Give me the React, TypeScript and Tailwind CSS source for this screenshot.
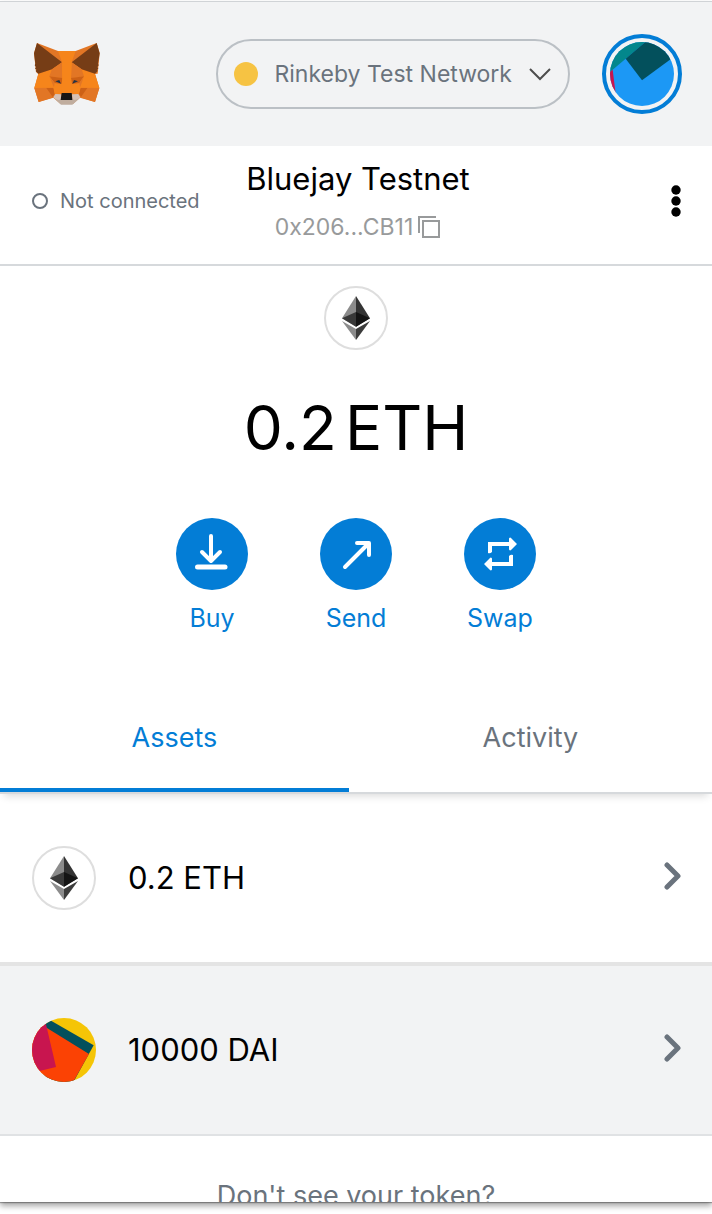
import { useState } from "react";

function Fox() {
  return (
    <svg viewBox="96 120 216 204" className="h-[68px] w-[72px]" aria-hidden="true">
      <path fill="#e27625" d="M111 129 174 153H227L290 129 299 160 293 221 285 222 298 264 285 306 240 293 220 311H181L160 293 116 306 103 264 115 222 108 216 102 160Z" />
      <path fill="#f6851b" d="M174 153H227L215 187 245 208 285 221 298 264 242 263 240 282 217 279H183L161 282 160 263 103 264 115 221 156 208 186 187Z" />
      <path fill="#763d16" d="M111 129 186 187 156 208 115 221 107 213 110 209 105 206 108 201 104 196 106 191 102 160Z" />
      <path fill="#763d16" d="M290 129 215 187 245 208 285 221 293 213 291 209 295 206 292 201 296 196 294 191 299 160Z" />
      <path fill="#e27625" d="M186 187 156 208 148 229 187 235ZM215 187 245 208 252 229 213 235Z" />
      <path fill="#cd6116" d="M148 229 187 234 185 252 164 249ZM252 229 213 234 216 252 238 249Z" />
      <path fill="#e27625" d="M148 229 164 249 162 263ZM252 229 238 249 240 263Z" />
      <path fill="#f6851b" d="M186 187 187 235 184 279H217L213 235 215 187Z" />
      <path fill="#e27625" d="M103 264H160L161 292 116 306ZM298 264H242L240 292 285 306Z" />
      <path fill="#cd6116" d="M139 264H160L164 281 158 291ZM262 264H242L237 281 243 291Z" />
      <path fill="#f6851b" d="M160 260 186 254 184 281 165 283ZM242 260 214 254 217 281 236 283Z" />
      <path fill="#233447" d="M166 244 178 240 183 251ZM234 244 222 240 217 251Z" />
      <path fill="#d7c1b3" d="M160 292 166 282 184 283 183 299H217L216 283 235 282 241 292 220 311H181Z" />
      <path fill="#c0ad9e" d="M177 300 183 297H217L224 300 236 297 217 314H183L165 297Z" />
      <path fill="#161616" d="M185 279H215L217 300H182Z" />
    </svg>
  );
}

function EthBadge() {
  return (
    <span className="flex size-16 shrink-0 items-center justify-center rounded-full border-2 border-[#dedede] bg-white">
      <svg viewBox="0 0 84 132" className="h-11 w-7" aria-hidden="true">
        <path fill="#343434" d="M42 0 84 67 42 92Z" />
        <path fill="#8c8c8c" d="M42 0 0 67 42 92Z" />
        <path fill="#141414" d="M42 48 84 67 42 92Z" />
        <path fill="#393939" d="M42 48 0 67 42 92Z" />
        <path fill="#3c3c3b" d="M42 99 84 75 42 132Z" />
        <path fill="#8c8c8c" d="M42 99 0 75 42 132Z" />
      </svg>
    </span>
  );
}

function AccountAvatar() {
  return (
    <svg viewBox="480 66 192 192" className="size-16 rounded-full" aria-hidden="true">
      <path fill="#1c98f5" d="M480 66H672V258H480Z" />
      <path fill="#03878c" d="M480 66H586L527 116 480 156Z" />
      <path fill="#03505c" d="M527 116 586 66H672V110L576 181Z" />
      <path fill="#c8154f" d="M480 155 488 149 497 222 480 215Z" />
    </svg>
  );
}

function DaiAvatar() {
  return (
    <svg viewBox="96 84 192 192" className="size-16 shrink-0 rounded-full" aria-hidden="true">
      <path fill="#f5c506" d="M96 84H288V276H96Z" />
      <path fill="#03505c" d="M132 80 281 166 218 280H130Z" />
      <path fill="#fb4204" d="M130 107 267 192 217 280H96V120Z" />
      <path fill="#c8154f" d="M135 90 168 231 96 248V84Z" />
    </svg>
  );
}

function BuyIcon() {
  return (
    <svg viewBox="0 0 72 72" className="size-[72px]" fill="none" stroke="#fff" strokeWidth="4" strokeLinecap="round" strokeLinejoin="round" aria-hidden="true">
      <path d="M35 18V42M26 34 35 43 44 34" />
      <path d="M21.500 49H49" strokeWidth="5" />
    </svg>
  );
}

function SendIcon() {
  return (
    <svg viewBox="0 0 72 72" className="size-[72px]" fill="none" stroke="#fff" strokeWidth="4" strokeLinecap="round" strokeLinejoin="round" aria-hidden="true">
      <path d="M25 49 48 26M37 25H49V37" />
    </svg>
  );
}

function SwapIcon() {
  return (
    <svg viewBox="0 0 72 72" className="size-[72px]" fill="#fff" aria-hidden="true">
      <path d="M24 35V24H45V20.500Q46 19 47 20L53 26 47 32Q46 33 45 31.500V28H28V34Q26 36 24 35Z" />
      <path d="M49 37V48H28V51.500Q27 53 26 52L20 46 26 40Q27 39 28 40.500V44H45V38Q47 36 49 37Z" />
    </svg>
  );
}

const actions = [
  { label: "Buy", Icon: BuyIcon },
  { label: "Send", Icon: SendIcon },
  { label: "Swap", Icon: SwapIcon },
];

function ChevronRight() {
  return (
    <svg viewBox="0 0 18 32" className="h-8 w-[18px]" fill="none" stroke="#6a737d" strokeWidth="5" strokeLinecap="round" strokeLinejoin="round" aria-hidden="true">
      <path d="M4 3 15 14 4 25" />
    </svg>
  );
}

export default function App() {
  const [tab, setTab] = useState("Assets");
  return (
    <div className="h-screen overflow-hidden bg-white pt-px pb-3 font-['Inter',sans-serif]">
      <div className="flex h-full flex-col overflow-hidden border-t border-[#d0d3d6] bg-white shadow-[0_4px_6px_rgba(0,0,0,0.35),0_1px_1px_rgba(0,0,0,0.3)]">
        <header className="flex h-36 shrink-0 items-center bg-[#f2f3f4] pr-[30px] pl-8">
          <Fox />
          <button className="ml-auto flex h-[70px] items-center rounded-full border-2 border-[#bbc0c5] px-4 text-[23px] text-[#6a737d]">
            <span className="mr-4 size-6 rounded-full bg-[#f6c343]" />
            Rinkeby Test Network
            <svg viewBox="0 0 24 16" className="ml-4 h-4 w-6" fill="none" stroke="#4d4d4d" strokeWidth="2" aria-hidden="true">
              <path d="M2 3 12 13 22 3" />
            </svg>
          </button>
          <button aria-label="My accounts" className="ml-8 flex size-20 shrink-0 items-center justify-center rounded-full border-4 border-[#037dd6]">
            <AccountAvatar />
          </button>
        </header>

        <section className="grid h-[120px] shrink-0 grid-cols-[1fr_auto_1fr] items-center border-b-2 border-[#d6d9dc] pr-7 pb-2 pl-8">
          <div className="flex items-center gap-3 text-xl whitespace-nowrap text-[#6a737d]">
            <span className="size-4 rounded-full border-2 border-[#6a737d]" />
            Not connected
          </div>
          <button className="flex flex-col items-center">
            <span className="text-[31px] leading-[52px] text-black">Bluejay Testnet</span>
            <span className="flex items-center gap-1 text-[23px] leading-[44px] text-[#989a9b]">
              0x206...CB11
              <svg viewBox="0 0 24 24" className="size-6" fill="none" stroke="#989a9b" strokeWidth="2" aria-hidden="true">
                <path d="M2 18V2H19M6 6H22V22H6Z" />
              </svg>
            </span>
          </button>
          <button aria-label="Account options" className="justify-self-end">
            <svg viewBox="0 0 16 32" className="h-8 w-4" aria-hidden="true">
              <circle cx="8" cy="5" r="4.700" />
              <circle cx="8" cy="16" r="4.700" />
              <circle cx="8" cy="27" r="4.700" />
            </svg>
          </button>
        </section>

        <section className="flex shrink-0 flex-col items-center pt-5">
          <EthBadge />
          <p className="mt-9 flex gap-2 text-[62px] leading-[84px] text-black">
            <span>0.2</span>
            <span>ETH</span>
          </p>
          <div className="mt-12 flex gap-[72px]">
            {actions.map(({ label, Icon }) => (
              <button key={label} className="flex w-[72px] flex-col items-center gap-2 text-[25px] leading-10 text-[#037dd6]">
                <span className="rounded-full bg-[#037dd6]">
                  <Icon />
                </span>
                {label}
              </button>
            ))}
          </div>
        </section>

        <div role="tablist" className="mt-[46px] flex shrink-0 border-b-2 border-[#d6d9dc] text-[27px] leading-[42px] shadow-[0_6px_8px_-4px_rgba(0,0,0,0.15)]">
          {["Assets", "Activity"].map((name) => (
            <button
              key={name}
              role="tab"
              aria-selected={tab === name}
              onClick={() => setTab(name)}
              className={`h-[108px] border-b-4 pt-1 first:w-[49%] last:flex-1 ${tab === name ? "border-[#037dd6] text-[#037dd6]" : "border-transparent text-[#6a737d]"}`}
            >
              {name}
            </button>
          ))}
        </div>

        <button className="flex h-[172px] shrink-0 items-center gap-8 border-b-4 border-[#e4e4e4] pr-[31px] pl-8 text-[31px] text-black">
          <EthBadge />
          <span className="flex-1 text-left">0.2 ETH</span>
          <ChevronRight />
        </button>
        <button className="flex h-[170px] shrink-0 items-center gap-8 border-b-2 border-[#e0e2e4] bg-[#f2f3f4] pr-[31px] pl-8 text-[31px] text-black">
          <DaiAvatar />
          <span className="flex-1 text-left">10000 DAI</span>
          <ChevronRight />
        </button>
        <p className="shrink-0 pt-10 text-center text-[27px] leading-10 text-[#6a737d]">Don't see your token?</p>
      </div>
    </div>
  );
}
